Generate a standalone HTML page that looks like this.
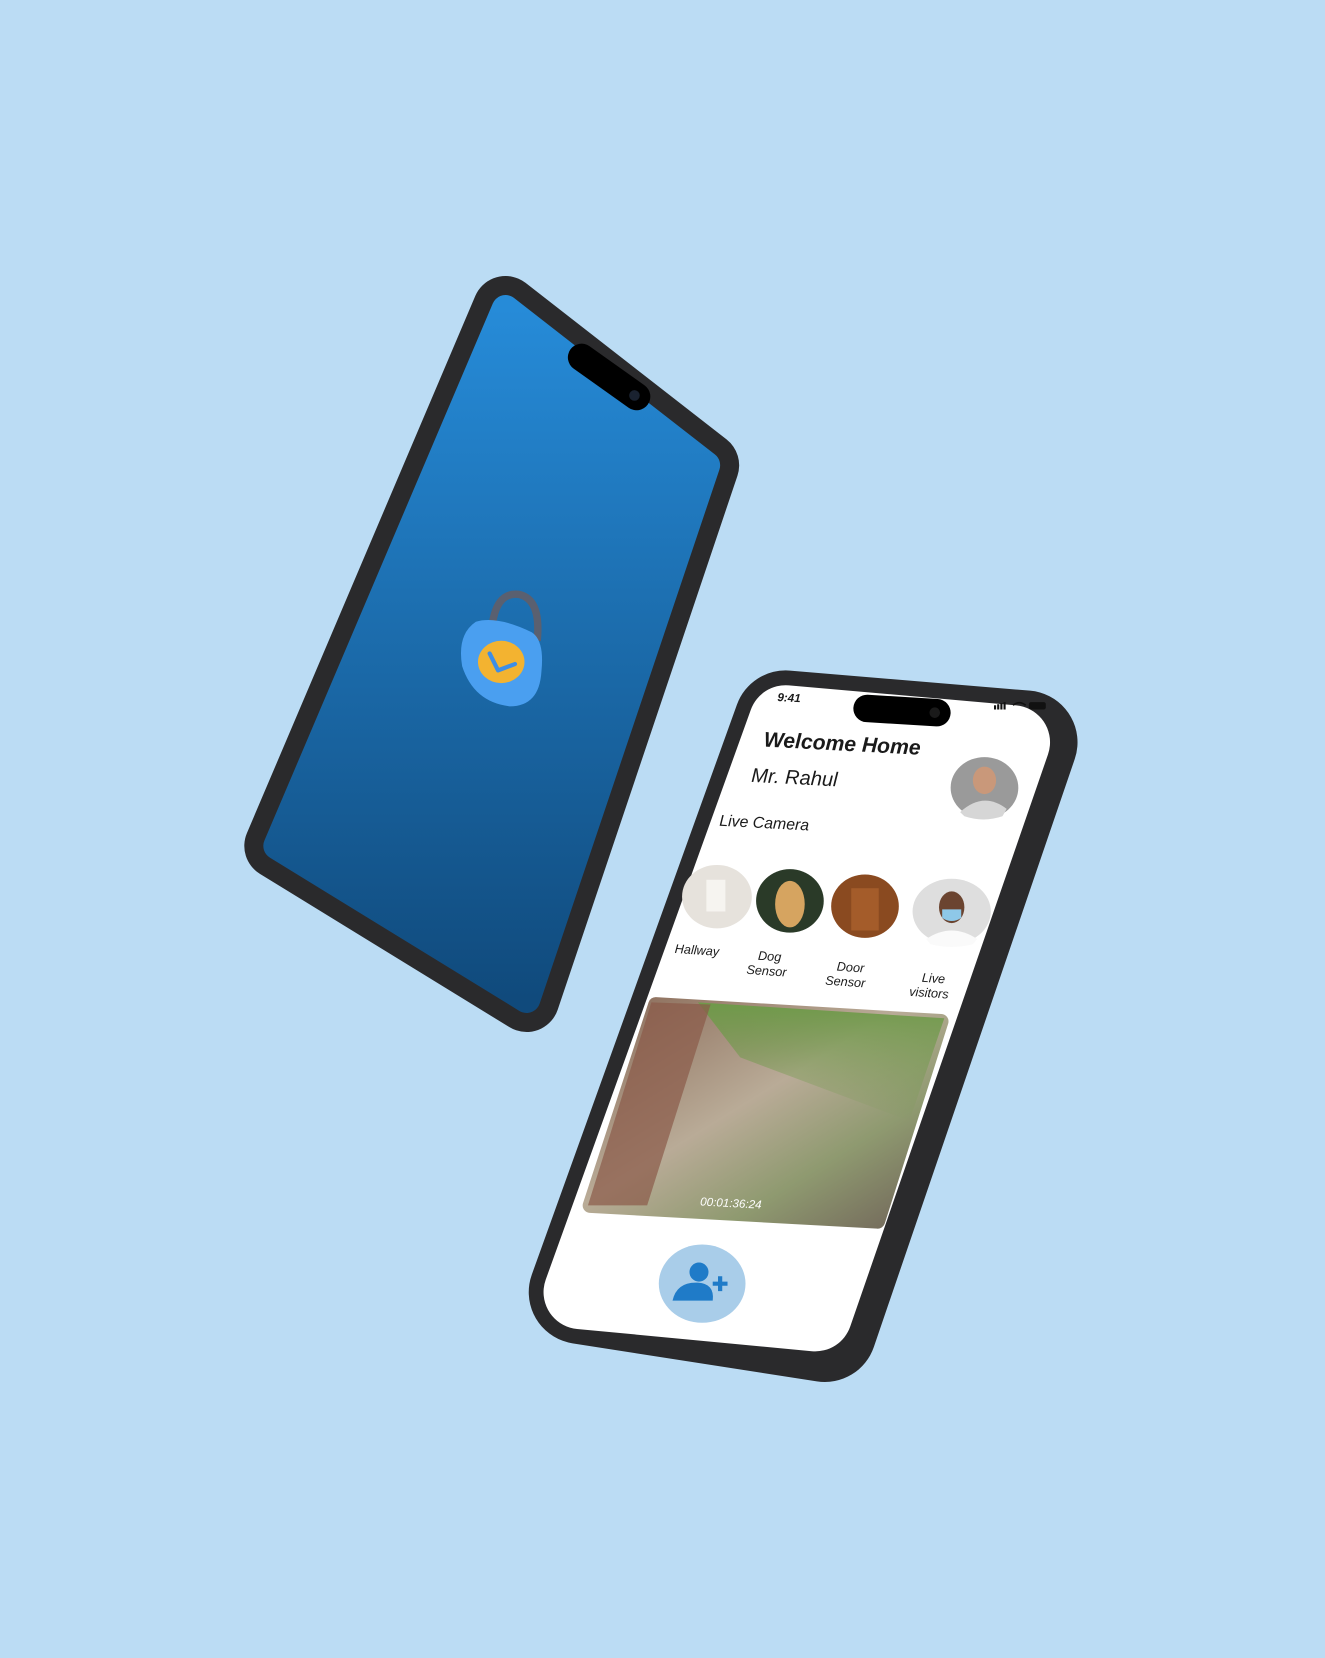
<!DOCTYPE html>
<html><head><meta charset="utf-8"><style>
html,body{margin:0;padding:0;background:#bbdcf4;}
svg{display:block}
text{font-family:"Liberation Sans",sans-serif;font-style:italic;fill:#1a1a1a}
</style></head><body>
<svg width="1325" height="1658" viewBox="0 0 1253 1568" xmlns="http://www.w3.org/2000/svg">
<defs>
<linearGradient id="blue" x1="0" y1="0" x2="0" y2="1">
<stop offset="0" stop-color="#268bd8"/><stop offset="1" stop-color="#104a7c"/></linearGradient>
<linearGradient id="vid" x1="0" y1="0" x2="1" y2="1">
<stop offset="0" stop-color="#8a6a58"/><stop offset="0.45" stop-color="#b9ab97"/><stop offset="0.7" stop-color="#8f9a70"/><stop offset="1" stop-color="#6f6258"/></linearGradient>
<linearGradient id="vidtop" x1="0" y1="0" x2="0" y2="1">
<stop offset="0" stop-color="#6f9a4a"/><stop offset="1" stop-color="#6f9a4a" stop-opacity="0"/></linearGradient>
</defs>
<!-- left phone -->
<polygon points="478,292 668,440 498,945 262,800" fill="#1c1c1e" stroke="#2a2a2c" stroke-width="62" stroke-linejoin="round"/>
<polygon points="478,292 668,440 498,945 262,800" fill="url(#blue)" stroke="url(#blue)" stroke-width="26" stroke-linejoin="round"/>
<line x1="550" y1="338" x2="602" y2="375" stroke="#000" stroke-width="26" stroke-linecap="round"/>
<circle cx="600" cy="374" r="5" fill="#1a2230"/>
<!-- lock -->
<path d="M465,596 Q468,560 490,562 Q512,566 508,606" fill="none" stroke="#5a6070" stroke-width="7"/>
<path d="M450,588 Q470,582 503,598 Q515,606 512,635 Q510,668 482,668 Q448,664 437,630 Q432,600 450,588Z" fill="#4a9ff0"/>
<ellipse cx="474" cy="626" rx="22" ry="20" fill="#f3b330"/>
<path d="M463,618 L471,634 L487,628" fill="none" stroke="#3d8ee6" stroke-width="4" stroke-linecap="round" stroke-linejoin="round"/>
<!-- right phone -->
<polygon points="743,683 970,702 780,1258 549,1222" fill="#1c1c1e" stroke="#2a2a2c" stroke-width="98" stroke-linejoin="round"/>
<polygon points="743,683 958,702 771,1243 549,1222" fill="#fff" stroke="#fff" stroke-width="70" stroke-linejoin="round"/>
<line x1="820" y1="670" x2="886" y2="674" stroke="#000" stroke-width="26" stroke-linecap="round"/>
<circle cx="884" cy="674" r="5" fill="#1a1a1a"/>
<text x="735" y="663" font-size="11" font-weight="bold" transform="rotate(3 735 663)">9:41</text>
<g fill="#111"><rect x="940" y="667" width="2" height="4"/><rect x="943" y="666" width="2" height="5"/><rect x="946" y="665" width="2" height="6"/><rect x="949" y="664" width="2" height="7"/></g>
<path d="M958,667 q6,-5 12,0" fill="none" stroke="#111" stroke-width="1.5"/>
<rect x="973" y="664" width="16" height="7" rx="2" fill="#111"/>
<g transform="rotate(3 722 706)">
<text x="722" y="706" font-size="20" font-weight="bold">Welcome Home</text>
<text x="712" y="740" font-size="19">Mr. Rahul</text>
<text x="684" y="783" font-size="15">Live Camera</text>
</g>
<ellipse cx="931" cy="745" rx="32" ry="29" fill="#9a9a9a"/>
<ellipse cx="931" cy="738" rx="11" ry="13" fill="#c9987a"/>
<path d="M908,768 Q930,748 952,765 L948,772 Q930,778 912,772Z" fill="#d6d6d6"/>
<ellipse cx="678" cy="848" rx="33" ry="30" fill="#e6e2dc"/>
<rect x="668" y="832" width="18" height="30" fill="#f6f4f0"/>
<ellipse cx="747" cy="852" rx="32" ry="30" fill="#2a3a28"/>
<ellipse cx="747" cy="855" rx="14" ry="22" fill="#d6a460"/>
<ellipse cx="818" cy="857" rx="32" ry="30" fill="#8a4a20"/>
<rect x="805" y="840" width="26" height="40" fill="#a45c2a"/>
<ellipse cx="900" cy="862" rx="37" ry="31" fill="#dedede"/>
<ellipse cx="900" cy="858" rx="12" ry="15" fill="#6b4430"/>
<path d="M891,860 h18 v8 q-9,6 -18,0z" fill="#8ec8e8"/>
<path d="M876,888 Q900,872 924,888 L920,893 Q900,898 880,893Z" fill="#fafafa"/>
<g font-size="12" transform="rotate(4 650 900)">
<text x="638" y="902">Hallway</text>
<text x="717" y="903">Dog</text><text x="707" y="917">Sensor</text>
<text x="792" y="908">Door</text><text x="782" y="922">Sensor</text>
<text x="873" y="913">Live</text><text x="862" y="927">visitors</text>
</g>
<polygon points="620,950 890,966 830,1155 558,1140" fill="url(#vid)" stroke="url(#vid)" stroke-width="14" stroke-linejoin="round"/>
<polygon points="660,948 893,963 860,1060 700,1000" fill="url(#vidtop)"/>
<polygon points="616,948 672,950 612,1140 556,1140" fill="#8a5a48" opacity="0.7"/>
<text x="662" y="1140" font-size="11" style="fill:#fff" transform="rotate(3 662 1140)">00:01:36:24</text>
<ellipse cx="664" cy="1214" rx="41" ry="37" fill="#a9cde9"/>
<circle cx="661" cy="1203" r="9" fill="#1f7bc8"/>
<path d="M636,1230 Q640,1212 660,1213 Q676,1214 674,1230Z" fill="#1f7bc8"/>
<path d="M674,1214 h14 M681,1207 v14" stroke="#1f7bc8" stroke-width="4"/>
</svg>
</body></html>
